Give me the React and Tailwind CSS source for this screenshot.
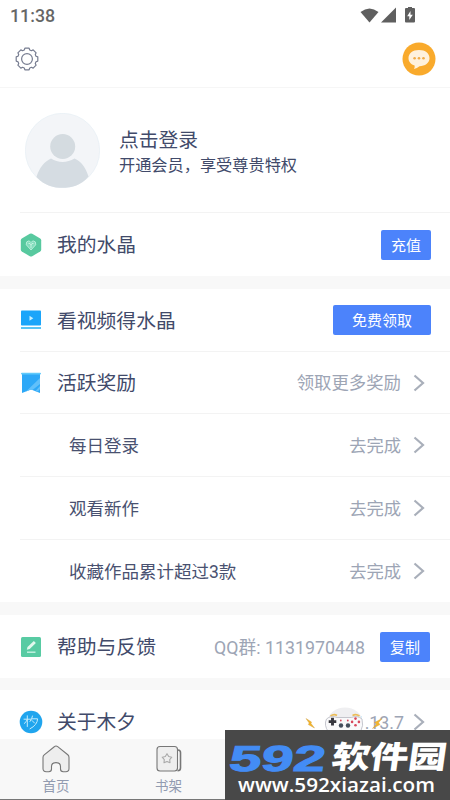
import React from 'react';

const Chevron = () => (
    <svg className="ml-[12px] h-[18px] w-[12px] shrink-0" viewBox="0 0 12 18" fill="none" stroke="#a9afba" strokeWidth="2.2">
        <path d="M1.5 1.5 L10 9 L1.5 16.5" />
    </svg>
);

// eight flat teeth around the gear
const gearPoints = [0, 45, 90, 135, 180, 225, 270, 315]
    .flatMap((a) => [[a - 17, 9.4], [a - 11, 11], [a + 11, 11], [a + 17, 9.4]])
    .map(([deg, r]) => {
        const t = (deg * Math.PI) / 180;
        return `${(12 + r * Math.sin(t)).toFixed(2)},${(12 - r * Math.cos(t)).toFixed(2)}`;
    })
    .join(' ');

const GearIcon = () => (
    <svg className="h-6 w-6" viewBox="0 0 24 24" fill="none" stroke="#767c90" strokeWidth="1.2" strokeLinejoin="round">
        <polygon points={gearPoints} />
        <circle cx="12" cy="12" r="5.4" />
    </svg>
);

const StatusIcons = () => (
    <svg className="h-[18px] w-[58px]" viewBox="0 0 58 18" fill="#5f5f5f">
        <path d="M0.5 5 Q9.5 -2 18.5 5 L9.5 15.5 Z" />
        <path d="M36 0.5 V15.5 H21 Z" />
        <path d="M48 1 V0 H52 V1 H54 Q55 1 55 2 V14.5 Q55 15.5 54 15.5 H46 Q45 15.5 45 14.5 V2 Q45 1 46 1 Z" />
        <path d="M50.5 4 L47.2 9.3 H49.3 V13 L52.8 7.8 H50.5 Z" fill="#fff" />
    </svg>
);

const ChatIcon = () => (
    <svg className="h-[34px] w-[34px]" viewBox="0 0 34 34">
        <circle cx="17" cy="17" r="16.5" fill="#f9aa2c" />
        <path d="M17 8 C23.5 8 27.5 11.5 27.5 16.2 C27.5 21 23 24 17.5 24.2 Q15 26.5 12 27 Q13 25.2 12.6 23.5 C9 22.3 6.5 19.7 6.5 16.2 C6.5 11.5 10.5 8 17 8 Z" fill="#fff1dc" />
        <g fill="#f2ab48">
            <circle cx="12.6" cy="16.3" r="1.3" />
            <circle cx="17" cy="16.3" r="1.3" />
            <circle cx="21.5" cy="16.3" r="1.3" />
        </g>
    </svg>
);

const Avatar = () => (
    <svg className="h-[75px] w-[75px]" viewBox="0 0 75 75">
        <circle cx="37.5" cy="37.5" r="37.2" fill="#f3f5f8" stroke="#e3edf4" strokeWidth="0.6" />
        <circle cx="37.7" cy="33.5" r="12.5" fill="#d4dbe0" />
        <path d="M11.5 64 C14 55 20 48 26 45.5 C33 50 42 50 49.5 45.5 C56 48 61 55 63.5 63.5 C55.5 73 46 74.8 37.5 74.8 C29 74.8 19.5 73 11.5 64 Z" fill="#d5dce2" />
    </svg>
);

const CrystalIcon = () => (
    <svg className="h-6 w-[22px]" viewBox="0 0 22 24">
        <path d="M9.8 0.8 Q11 0.2 12.2 0.8 L20.2 5.4 Q21.2 6 21.2 7.2 V16.8 Q21.2 18 20.2 18.6 L12.2 23.2 Q11 23.8 9.8 23.2 L1.8 18.6 Q0.8 18 0.8 16.8 V7.2 Q0.8 6 1.8 5.4 Z" fill="#58c99f" />
        <path d="M11 17 L6.3 11.8 Q5.8 8.3 8.3 8 Q10 7.8 11 9.5 Q12 7.8 13.7 8 Q16.2 8.3 15.7 11.8 Z" fill="#83dcbc" stroke="#c0f0df" strokeWidth="0.9" />
        <path d="M8.5 10.5 H10 L11 12 L12 10.5 H13.5 M11 12 V15" fill="none" stroke="#d5f7e9" strokeWidth="0.8" />
    </svg>
);

const VideoIcon = () => (
    <svg className="h-[20px] w-[22px]" viewBox="0 0 22 20">
        <rect x="1" y="0.5" width="20" height="15" rx="0.8" fill="#1ba5fa" />
        <path d="M9.5 5.7 L13.3 8.2 L9.5 10.7 Z" fill="#c6efff" />
        <rect x="1" y="17" width="20" height="2" fill="#59c4f5" />
    </svg>
);

const BannerIcon = () => (
    <svg className="h-[22px] w-[22px]" viewBox="0 0 22 22">
        <path d="M2 1 H20 V21 L11 17.5 L2 21 Z" fill="#2da8f7" />
        <path d="M20 6 V12 L12.5 18 L11 17.5 L6 19.4 Z M20 14 V17 L18 19.5 L15.5 19 Z" fill="#61c0fa" />
        <rect x="1" y="0.7" width="20" height="1.8" rx="0.9" fill="#60c9fb" />
    </svg>
);

const EditIcon = () => (
    <svg className="h-[22px] w-[22px]" viewBox="0 0 22 22">
        <rect x="1" y="1" width="20" height="20" rx="1.5" fill="#58cba3" />
        <path d="M6.8 13.8 L7.5 11 L13.8 4.9 L15.9 7 L9.7 13.1 Z" fill="#e1f8ed" />
        <path d="M7 16.2 H15.5" stroke="#c8f3e2" strokeWidth="1.4" />
    </svg>
);

const AboutIcon = () => (
    <svg className="h-[24px] w-[24px] shrink-0" viewBox="0 0 24 24">
        <circle cx="12" cy="12" r="11.3" fill="#20a5ee" />
        <path d="M5 9.2 H11.6 M8.3 5.8 V16.5 M8.3 9.5 Q7.5 12 5.3 13.5 M13.5 6 Q13 9 11 11.5 M13 8.8 H18.6 Q18.4 15 11 18.8 M13 10.5 L15.5 13" fill="none" stroke="#c3ecfc" strokeWidth="1" strokeLinecap="round" />
    </svg>
);

const HomeIcon = () => (
    <svg className="h-[28px] w-[28px]" viewBox="0 0 28 28" fill="#eee" stroke="#777" strokeWidth="1.1" strokeLinejoin="round">
        <path d="M12.3 1.7 Q14 0.3 15.7 1.7 L25.8 9.8 Q27 10.8 27 12.5 V23.5 Q27 26.7 23.8 26.7 H21.3 Q18.5 26.7 18.5 24 V21.5 Q18.5 17.6 14 17.6 Q9.5 17.6 9.5 21.5 V24 Q9.5 26.7 6.7 26.7 H4.2 Q1 26.7 1 23.5 V12.5 Q1 10.8 2.2 9.8 Z" />
    </svg>
);

const ShelfIcon = () => (
    <svg className="h-[28px] w-[28px]" viewBox="0 0 28 28" fill="none" stroke="#777" strokeWidth="1.1" strokeLinejoin="round">
        <path d="M23 5 Q25.5 5.2 25.5 7.5 V23 Q25.5 25.8 22.5 25.8" strokeWidth="1.6" />
        <rect x="2" y="1.5" width="20.5" height="24.5" rx="3" fill="#eee" />
        <path d="M12 8.7 L13.7 11.5 L16.8 12.2 L14.7 14.6 L15 17.8 L12 16.6 L9 17.8 L9.3 14.6 L7.2 12.2 L10.3 11.5 Z" stroke="#a9a9a9" />
    </svg>
);

const Gamepad = () => (
    <svg className="absolute left-[305px] top-[706px] h-[28px] w-[80px]" viewBox="0 0 80 28">
        <ellipse cx="40" cy="15" rx="17" ry="13.5" fill="#efeff1" />
        <path d="M25.500 10 Q29 7.500 32 9.500 M47.500 9.500 Q51 7.500 54.500 10" fill="none" stroke="#ebbd58" strokeWidth="1.6" />
        <path d="M21.500 13 Q26 9 32 11.500 H46.500 Q52 9 57 13 Q59 19 55.500 26 H23.500 Q18.500 19 21.500 13 Z" fill="#f9f9fa" stroke="#b7b9c2" strokeWidth="0.8" />
        <path d="M27.500 11.800 V19.400 M23.700 15.600 H31.300" stroke="#36363d" strokeWidth="2.900" />
        <g fill="#d8485c">
            <circle cx="35.800" cy="14.500" r="0.900" />
            <circle cx="42.800" cy="14.500" r="0.900" />
            <circle cx="50.500" cy="12.600" r="1.300" />
            <circle cx="53.900" cy="15.900" r="1.300" />
            <circle cx="50.500" cy="19.200" r="1.300" />
            <circle cx="47.100" cy="15.900" r="1.300" />
        </g>
        <circle cx="36" cy="19.500" r="2.200" fill="#454e5c" />
        <circle cx="43" cy="19.500" r="2.200" fill="#454e5c" />
        <path d="M1 12.500 L6.500 16 L6 17.500 L9.500 22 L3.300 18.500 L4.200 17 Z" fill="#f5b52a" stroke="#c99a3a" strokeWidth="0.4" />
        <path d="M77 12.500 L69.500 16.500 L71.500 18 L67.500 22.500 L75 18.500 L73.500 16.800 Z" fill="#f5b52a" stroke="#c99a3a" strokeWidth="0.4" />
    </svg>
);

const Row = ({ icon, title, height = 'h-[63px]', children }) => (
    <div className={`flex items-center pl-5 pr-[19px] ${height}`}>
        <div className="flex w-[22px] shrink-0 justify-center">{icon}</div>
        <div className="ml-[15px] flex-1 pt-[3px] text-[19.8px] text-[#414a6a]">{title}</div>
        {children}
    </div>
);

const SubRow = ({ title }) => (
    <div className="ml-5 flex h-[63px] items-center border-t border-[#f3f3f3] pl-[49px] pr-[25px]">
        <div className="flex-1 pt-[3px] text-[17.5px] text-[#495170]">{title}</div>
        <div className="pt-[3px] text-[17.3px] text-[#9da5b5]">去完成</div>
        <Chevron />
    </div>
);

const Button = ({ className, children }) => (
    <button className={`h-[30px] shrink-0 rounded-[2px] bg-[#4c83fb] pt-[3px] text-[15px] text-white ${className}`}>
        {children}
    </button>
);

const tasks = ['每日登录', '观看新作', '收藏作品累计超过3款'];

const App = () => {
    return (
        <div className="relative h-[800px] w-[450px] overflow-hidden bg-[#f8f8f8] font-['Roboto','Noto_Sans_CJK_SC',sans-serif] leading-none">
            <header className="h-[88px] border-b border-[#f6f6f6] bg-white">
                <div className="flex h-8 items-center justify-between pl-[10px] pr-[32px]">
                    <span className="text-[17.8px] font-medium text-[#666]">11:38</span>
                    <StatusIcons />
                </div>
                <div className="flex h-[54px] items-center justify-between pl-[15px] pr-[14px]">
                    <GearIcon />
                    <ChatIcon />
                </div>
            </header>

            <section className="bg-white">
                <div className="flex h-[124px] items-center pl-[25px]">
                    <Avatar />
                    <div className="ml-[19px] pt-1 text-[#414a6a]">
                        <div className="text-[19.8px] leading-[26px]">点击登录</div>
                        <div className="text-[16.2px] leading-[23px]">开通会员，享受尊贵特权</div>
                    </div>
                </div>
                <div className="ml-5 border-t border-[#f3f3f3]" />
                <Row icon={<CrystalIcon />} title="我的水晶">
                    <Button className="w-[50px]">充值</Button>
                </Row>
            </section>

            <section className="mt-[13px] bg-white">
                <Row icon={<VideoIcon />} title="看视频得水晶" height="h-[62px]">
                    <Button className="w-[98px]">免费领取</Button>
                </Row>
                <div className="ml-5 border-t border-[#f3f3f3]" />
                <Row icon={<BannerIcon />} title="活跃奖励" height="h-[61px]">
                    <div className="pt-[3px] text-[17.4px] text-[#9da5b5]">领取更多奖励</div>
                    <div className="mr-[6px] flex"><Chevron /></div>
                </Row>
                {tasks.map((task) => (
                    <SubRow key={task} title={task} />
                ))}
            </section>

            <section className="mt-[13px] bg-white">
                <Row icon={<EditIcon />} title="帮助与反馈">
                    <div className="mr-[15px] pt-[2px] text-[17.8px] text-[#9da5b5]">QQ群: 1131970448</div>
                    <Button className="mr-px w-[50px]">复制</Button>
                </Row>
            </section>

            <section className="mt-[12px] bg-white">
                <Row icon={<AboutIcon />} title="关于木夕">
                    <div className="pt-[3px] text-[17.8px] text-[#9da5b5]">1.13.7</div>
                    <div className="-ml-[3px] mr-[6px] flex"><Chevron /></div>
                </Row>
            </section>

            <nav className="absolute bottom-0 left-0 flex h-[61px] w-full border-b border-[#777] bg-[#f8f8f8] text-[13.5px] text-[#929bb0]">
                <div className="flex w-[112px] flex-col items-center pt-[6px]">
                    <HomeIcon />
                    <span className="mt-[7px]">首页</span>
                </div>
                <div className="flex w-[113px] flex-col items-center pt-[6px]">
                    <ShelfIcon />
                    <span className="mt-[7px]">书架</span>
                </div>
            </nav>

            <Gamepad />

            <div className="absolute left-[225px] top-[730px] h-[70px] w-[225px] overflow-hidden bg-[#484848]">
                <svg className="h-full w-full" viewBox="0 0 225 70">
                    <g transform="translate(3 41) skewX(-8)">
                        <text x="0" y="-0.5" textLength="96" lengthAdjust="spacingAndGlyphs" fontFamily="Liberation Sans" fontWeight="700" fontSize="36" fill="#438cf5" stroke="#438cf5" strokeWidth="1">592</text>
                        <text x="102" y="-3" textLength="115" lengthAdjust="spacingAndGlyphs" fontFamily="Noto Sans CJK SC" fontWeight="900" fontSize="31" fill="#fff">软件园</text>
                    </g>
                    <text x="13" y="62" textLength="197" lengthAdjust="spacingAndGlyphs" fontFamily="Open Sans" fontWeight="600" fontSize="20" fill="#fff">www.592xiazai.com</text>
                </svg>
            </div>
        </div>
    );
};

export default App;
